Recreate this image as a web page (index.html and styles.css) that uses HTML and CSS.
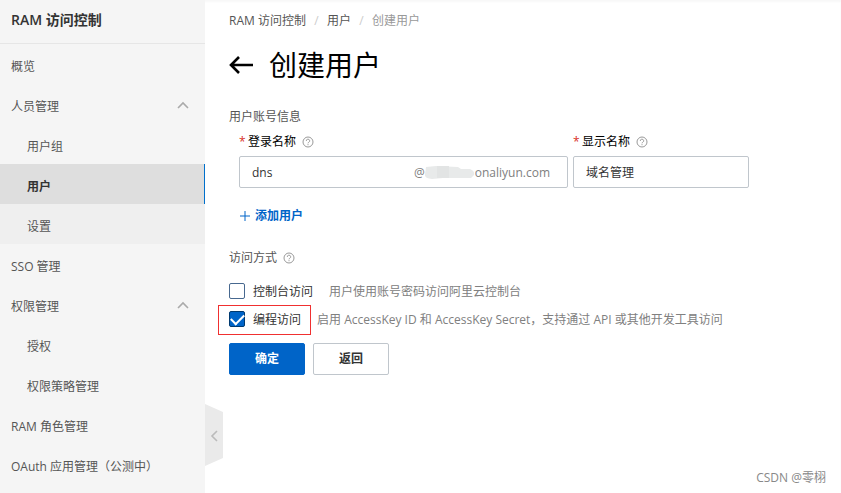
FILE: index.html
```
<!DOCTYPE html>
<html lang="zh-CN">
<head>
    <meta charset="UTF-8">
    <meta name="viewport" content="width=device-width, initial-scale=1.0">
    <title>RAM 访问控制</title>
    <link rel="stylesheet" href="styles.css">
</head>
<body>
    <svg width="0" height="0" class="symbols">
        <symbol id="icon-help" viewBox="0 0 12 12">
            <circle cx="6" cy="6" r="5" fill="none" stroke="currentColor"/>
            <path d="M4.3 4.9a1.7 1.6 0 1 1 2.5 1.3q-.8.4-.8 1.1M6 8.2v1" fill="none" stroke="currentColor"/>
        </symbol>
        <symbol id="icon-up" viewBox="0 0 12 8">
            <path d="M1 7l5-5 5 5" fill="none" stroke="currentColor" stroke-width="1.6"/>
        </symbol>
    </svg>

    <div class="layout">
        <nav class="sidebar">
            <div class="sidebar-title">RAM 访问控制</div>
            <ul class="menu">
                <li><a href="#">概览</a></li>
                <li>
                    <a href="#">人员管理 <svg class="arrow"><use href="#icon-up"/></svg></a>
                    <ul class="submenu">
                        <li><a href="#">用户组</a></li>
                        <li><a href="#" class="active">用户</a></li>
                        <li><a href="#" class="shaded">设置</a></li>
                    </ul>
                </li>
                <li><a href="#">SSO 管理</a></li>
                <li>
                    <a href="#">权限管理 <svg class="arrow"><use href="#icon-up"/></svg></a>
                    <ul class="submenu">
                        <li><a href="#">授权</a></li>
                        <li><a href="#">权限策略管理</a></li>
                    </ul>
                </li>
                <li><a href="#">RAM 角色管理</a></li>
                <li><a href="#">OAuth 应用管理（公测中）</a></li>
            </ul>
            <button type="button" class="collapse" aria-label="收起">
                <svg viewBox="0 0 8 12"><path d="M7 1L2 6l5 5" fill="none" stroke="currentColor" stroke-width="1.6"/></svg>
            </button>
        </nav>

        <main class="content">
            <div class="breadcrumb">
                <a href="#">RAM 访问控制</a>
                <span class="slash">/</span>
                <a href="#">用户</a>
                <span class="slash">/</span>
                <span class="current">创建用户</span>
            </div>

            <div class="page-title">
                <a href="#" class="back" aria-label="返回">
                    <svg viewBox="0 0 24 20"><path d="M24 10H2M10 2l-8 8 8 8" fill="none" stroke="currentColor" stroke-width="2.6"/></svg>
                </a>
                <h1>创建用户</h1>
            </div>

            <form>
                <h2>用户账号信息</h2>
                <div class="fields">
                    <div class="field login">
                        <div class="field-label">
                            <span class="required">*</span>
                            <label for="login-name">登录名称</label>
                            <svg class="help"><use href="#icon-help"/></svg>
                        </div>
                        <div class="input-box">
                            <input type="text" id="login-name" value="dns">
                            <span class="suffix">@<svg class="smudge" viewBox="0 0 50 14"><path d="M1 1l10-1 22 1 3 2 9 0q5 2 4 6l-3 3-28 0-11 1q-8-1-7-5z" fill="#e8eaea"/><path d="M12 0h12v12H12z" fill="#e2e4e4"/></svg>onaliyun.com</span>
                        </div>
                    </div>
                    <div class="field display">
                        <div class="field-label">
                            <span class="required">*</span>
                            <label for="display-name">显示名称</label>
                            <svg class="help"><use href="#icon-help"/></svg>
                        </div>
                        <div class="input-box">
                            <input type="text" id="display-name" value="域名管理">
                        </div>
                    </div>
                </div>
                <button type="button" class="add-user">
                    <svg viewBox="0 0 10 10"><path d="M5 0v10M0 5h10" stroke="currentColor"/></svg>
                    添加用户
                </button>

                <h2>访问方式 <svg class="help"><use href="#icon-help"/></svg></h2>
                <div class="access">
                    <div class="access-row">
                        <label><input type="checkbox"> <span>控制台访问</span></label>
                        <span class="hint">用户使用账号密码访问阿里云控制台</span>
                    </div>
                    <div class="access-row">
                        <label class="marked"><input type="checkbox" checked> <span>编程访问</span></label>
                        <span class="hint">启用 AccessKey ID 和 AccessKey Secret，支持通过 API 或其他开发工具访问</span>
                    </div>
                </div>

                <div class="buttons">
                    <button type="submit" class="btn primary">确定</button>
                    <button type="button" class="btn">返回</button>
                </div>
            </form>
        </main>
    </div>

    <div class="watermark">CSDN @零栩</div>
</body>
</html>
```
FILE: styles.css
```
* {
    box-sizing: border-box;
}

body {
    margin: 0;
    font-family: "Open Sans", "Noto Sans CJK SC", sans-serif;
    font-size: 12px;
    line-height: 16px;
    color: #333;
    background-color: #fff;
}

ul {
    list-style: none;
    margin: 0;
    padding: 0;
}

a {
    color: inherit;
    text-decoration: none;
}

button,
input {
    font: inherit;
    color: inherit;
}

svg {
    flex: none;
}

.symbols {
    position: absolute;
}

.layout {
    display: flex;
    min-height: 100vh;
    box-shadow: inset 0 2px 2px rgba(0, 0, 0, 0.03);
}

/* sidebar */
.sidebar {
    position: relative;
    flex: none;
    width: 205px;
    background-color: #f5f5f5;
}

.sidebar-title {
    height: 44px;
    padding: 12px 11px;
    border-bottom: 1px solid #e6e6e6;
    font-size: 14px;
    font-weight: 600;
}

.menu a {
    display: flex;
    align-items: center;
    justify-content: space-between;
    height: 40px;
    padding: 6px 16px 0 11px;
    color: #555;
}

.menu .submenu a {
    padding-left: 27px;
}

.menu .active {
    background-color: #dedede;
    border-right: 1px solid #0070cc;
    color: #333;
    font-weight: bold;
}

.menu .shaded {
    background-color: #efefef;
}

.arrow {
    width: 12px;
    height: 8px;
    margin-bottom: 4px;
    color: #aaa;
}

.collapse {
    position: absolute;
    left: 100%;
    top: 404px;
    display: flex;
    align-items: center;
    justify-content: center;
    width: 18px;
    height: 62px;
    padding: 2px 0 0;
    border: 0;
    background-color: #eaeaea;
    color: #bbb;
    clip-path: polygon(0 0, 100% 8px, 100% 54px, 0 100%);
}

.collapse svg {
    width: 8px;
    height: 12px;
}

/* content */
.content {
    flex: 1;
    min-width: 0;
    padding: 13px 24px;
}

.breadcrumb {
    display: flex;
    color: #555;
}

.slash {
    width: 21px;
    text-align: center;
    color: #ccc;
}

.current {
    color: #999;
}

.page-title {
    display: flex;
    align-items: center;
    gap: 16px;
    margin: 16px 0 22px;
    color: #000;
}

.back svg {
    display: block;
    width: 24px;
    height: 20px;
}

h1 {
    margin: 0;
    font-size: 28px;
    font-weight: 400;
    line-height: 40px;
}

h2 {
    display: flex;
    align-items: center;
    gap: 6px;
    margin: 0;
    font-size: 12px;
    font-weight: normal;
    line-height: 20px;
    color: #555;
}

.help {
    width: 12px;
    height: 12px;
    color: #999;
}

.fields {
    display: flex;
    gap: 5px;
    margin: 7px 0 0 10px;
}

.login {
    width: 329px;
}

.display {
    width: 176px;
}

.field-label {
    display: flex;
    align-items: center;
    height: 16px;
    margin-bottom: 6px;
    color: #000;
}

.required {
    width: 9px;
    color: #d93026;
}

.field-label .help {
    margin-left: 6px;
}

.input-box {
    display: flex;
    align-items: center;
    height: 32px;
    border: 1px solid #c0c6cc;
    border-radius: 2px;
}

.input-box input {
    flex: 1;
    min-width: 0;
    padding: 2px 12px 0;
    border: 0;
    background: none;
    outline: none;
}

.suffix {
    display: flex;
    align-items: center;
    padding: 2px 17px 0 0;
    color: #808080;
}

.smudge {
    width: 50px;
    height: 14px;
}

.add-user {
    display: flex;
    align-items: center;
    gap: 5px;
    margin: 20px 0 24px 11px;
    padding: 0;
    border: 0;
    background: none;
    color: #0064c8;
    font-weight: bold;
}

.add-user svg {
    width: 10px;
    height: 10px;
}

.access {
    margin: 9px 0 10px;
}

.access-row {
    display: flex;
    align-items: center;
    gap: 16px;
    height: 28px;
}

.access-row label {
    position: relative;
    display: flex;
    align-items: center;
    gap: 8px;
}

.access-row span {
    padding-top: 2px;
}

.access-row input {
    appearance: none;
    width: 16px;
    height: 16px;
    margin: 0;
    border: 1px solid #47688f;
    border-radius: 2px;
    background-color: #fff;
}

.access-row input:checked {
    background-color: #0064c8;
    border-color: #00396f;
}

.access-row input:checked::after {
    content: "";
    display: block;
    width: 11px;
    height: 6px;
    margin: 2px 1px;
    border: solid #fff;
    border-width: 0 0 2px 2px;
    transform: rotate(-45deg);
}

/* red frame around the option */
.marked::after {
    content: "";
    position: absolute;
    inset: -5px -10px -7px -11px;
    border: 1px solid #f03030;
}

.hint {
    color: #808080;
}

.buttons {
    display: flex;
    gap: 8px;
}

.btn {
    width: 76px;
    height: 32px;
    border: 1px solid #c0c6cc;
    border-radius: 2px;
    background-color: #fff;
    font-weight: bold;
}

.btn.primary {
    background-color: #0064c8;
    border-color: #0064c8;
    color: #fff;
}

.watermark {
    position: absolute;
    right: 15px;
    bottom: 7px;
    color: #888;
}
```
